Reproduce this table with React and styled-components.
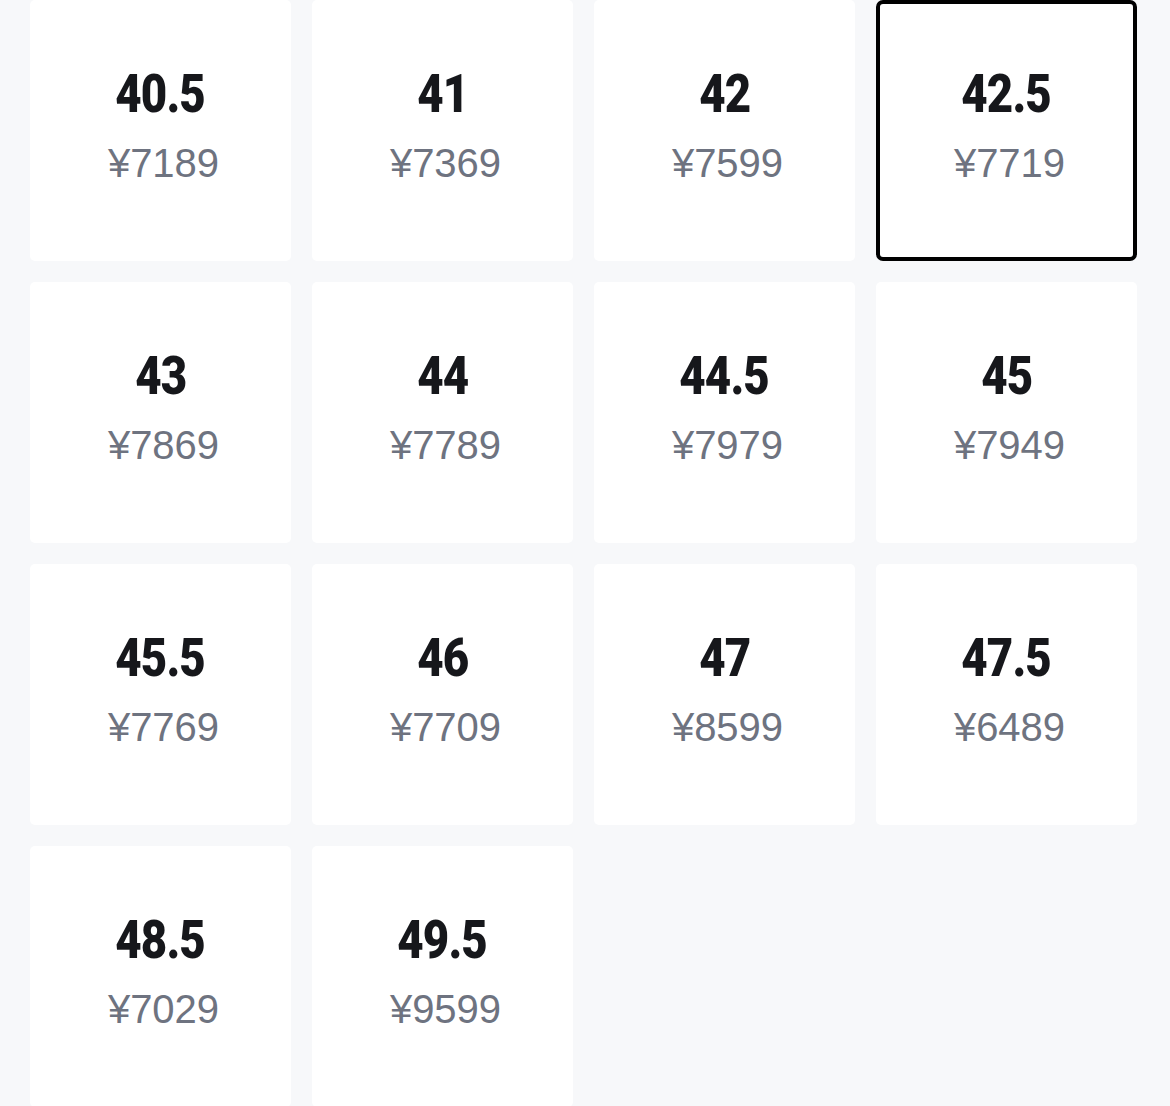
import React from 'react';
import styled, { createGlobalStyle } from 'styled-components';

const GlobalStyle = createGlobalStyle`
  html, body {
    margin: 0;
    padding: 0;
    background: #f7f8fa;
  }
`;

const Grid = styled.div`
  display: grid;
  grid-template-columns: repeat(4, 261px);
  grid-auto-rows: 261px;
  gap: 21px;
  padding: 0 33px 0 30px;
`;

const Card = styled.div`
  box-sizing: border-box;
  background: #ffffff;
  border: 4px solid ${props => (props.selected ? '#000000' : 'transparent')};
  border-radius: ${props => (props.selected ? '7px' : '5px')};
  padding-bottom: 10px;
  display: flex;
  flex-direction: column;
  align-items: center;
  justify-content: center;
  gap: 22px;
  cursor: pointer;
`;

const Size = styled.div`
  font-family: Roboto, 'Liberation Sans', sans-serif;
  font-weight: 900;
  font-size: 53px;
  line-height: 1;
  color: #16171b;
  letter-spacing: -1px;
  transform: scaleX(0.86);
`;

const Price = styled.div`
  font-family: 'Liberation Sans', 'Noto Sans CJK SC', sans-serif;
  font-weight: 400;
  font-size: 40px;
  line-height: 1;
  color: #6e7380;
  margin-left: 6px;
`;

const sizes = [
  ['40.5', 7189],
  ['41', 7369],
  ['42', 7599],
  ['42.5', 7719],
  ['43', 7869],
  ['44', 7789],
  ['44.5', 7979],
  ['45', 7949],
  ['45.5', 7769],
  ['46', 7709],
  ['47', 8599],
  ['47.5', 6489],
  ['48.5', 7029],
  ['49.5', 9599],
];

export default function App() {
  return (
    <>
      <GlobalStyle />
      <Grid>
        {sizes.map(([size, price]) => (
          <Card key={size} selected={size === '42.5'}>
            <Size>{size}</Size>
            <Price>¥{price}</Price>
          </Card>
        ))}
      </Grid>
    </>
  );
}
